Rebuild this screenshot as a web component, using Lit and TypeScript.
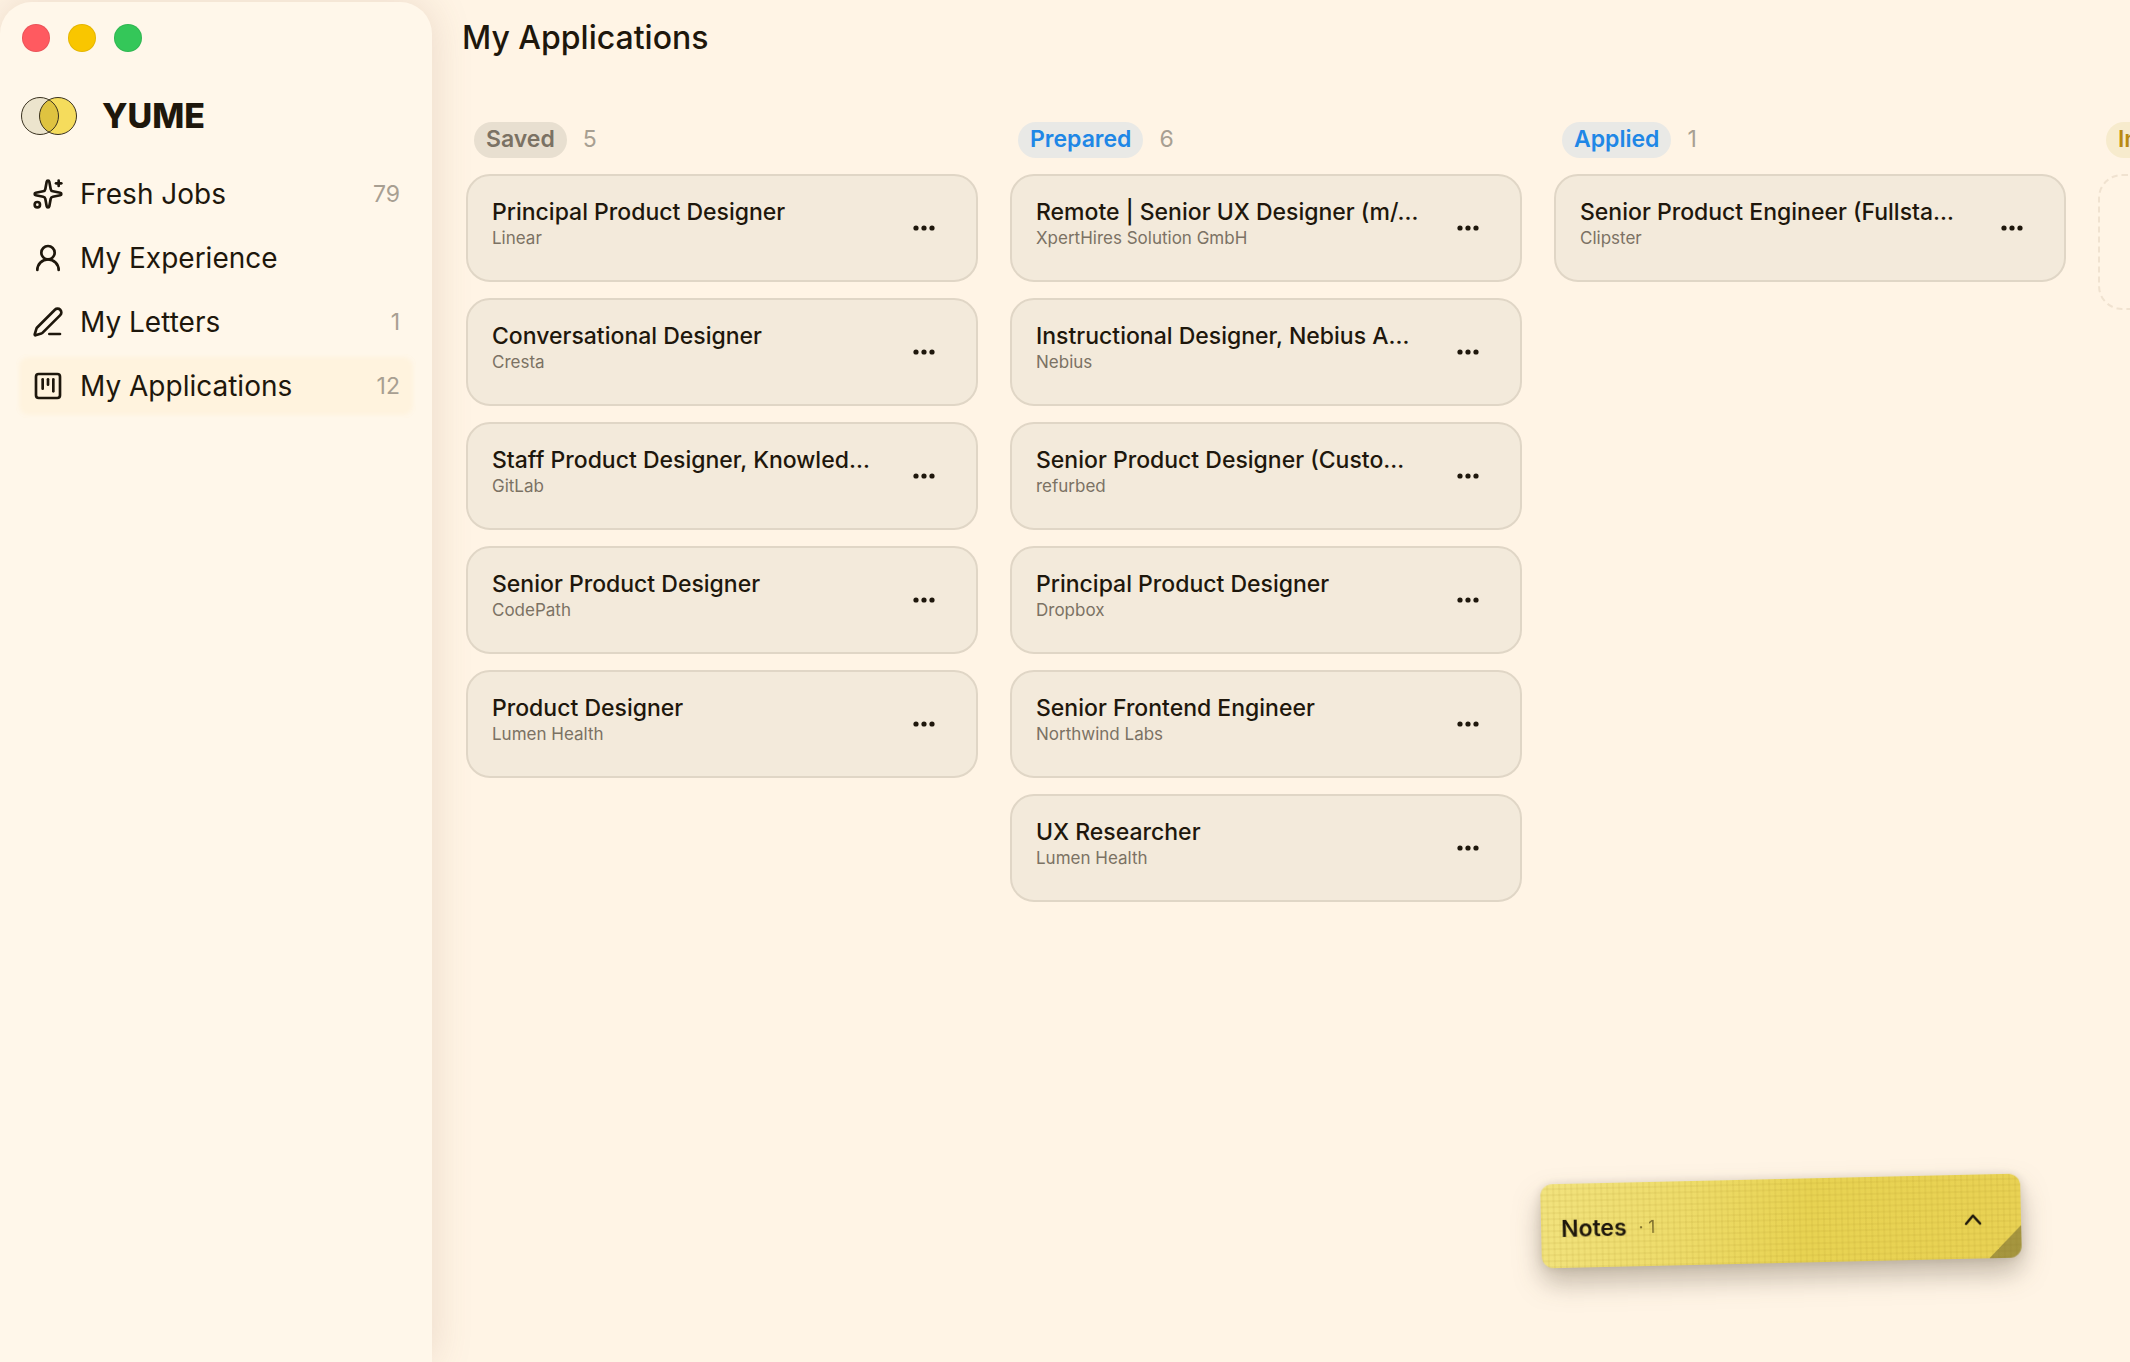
import { LitElement, html, css, svg } from "lit";
import { customElement, property } from "lit/decorators.js";

type Tone = "neutral" | "info" | "amber";

interface Job {
  title: string;
  company: string;
}

interface Column {
  name: string;
  tone: Tone;
  jobs: Job[];
}

interface NavItem {
  label: string;
  icon: keyof typeof icons;
  count?: number;
  active?: boolean;
}

const icons = {
  sparkles: svg`<path d="M11.017 2.814a1 1 0 0 1 1.966 0l1.051 5.558a2 2 0 0 0 1.594 1.594l5.558 1.051a1 1 0 0 1 0 1.966l-5.558 1.051a2 2 0 0 0-1.594 1.594l-1.051 5.558a1 1 0 0 1-1.966 0l-1.051-5.558a2 2 0 0 0-1.594-1.594l-5.558-1.051a1 1 0 0 1 0-1.966l5.558-1.051a2 2 0 0 0 1.594-1.594z"/><path d="M20 2v4"/><path d="M22 4h-4"/><circle cx="4" cy="20" r="2"/>`,
  user: svg`<circle cx="12" cy="8" r="5"/><path d="M20 21a8 8 0 0 0-16 0"/>`,
  pen: svg`<path d="M13 21h8"/><path d="M21.174 6.812a1 1 0 0 0-3.986-3.987L3.842 16.174a2 2 0 0 0-.5.83l-1.321 4.352a.5.5 0 0 0 .623.622l4.353-1.32a2 2 0 0 0 .83-.497z"/>`,
  kanban: svg`<rect x="3" y="3" width="18" height="18" rx="2"/><path d="M8 7v7"/><path d="M12 7v4"/><path d="M16 7v9"/>`,
};

const navItems: NavItem[] = [
  { label: "Fresh Jobs", icon: "sparkles", count: 79 },
  { label: "My Experience", icon: "user" },
  { label: "My Letters", icon: "pen", count: 1 },
  { label: "My Applications", icon: "kanban", count: 12, active: true },
];

const columns: Column[] = [
  {
    name: "Saved",
    tone: "neutral",
    jobs: [
      { title: "Principal Product Designer", company: "Linear" },
      { title: "Conversational Designer", company: "Cresta" },
      { title: "Staff Product Designer, Knowled…", company: "GitLab" },
      { title: "Senior Product Designer", company: "CodePath" },
      { title: "Product Designer", company: "Lumen Health" },
    ],
  },
  {
    name: "Prepared",
    tone: "info",
    jobs: [
      { title: "Remote | Senior UX Designer (m/…", company: "XpertHires Solution GmbH" },
      { title: "Instructional Designer, Nebius A…", company: "Nebius" },
      { title: "Senior Product Designer (Custo…", company: "refurbed" },
      { title: "Principal Product Designer", company: "Dropbox" },
      { title: "Senior Frontend Engineer", company: "Northwind Labs" },
      { title: "UX Researcher", company: "Lumen Health" },
    ],
  },
  {
    name: "Applied",
    tone: "info",
    jobs: [{ title: "Senior Product Engineer (Fullsta…", company: "Clipster" }],
  },
  { name: "Interview", tone: "amber", jobs: [] },
];

@customElement("side-bar")
class SideBar extends LitElement {
  static styles = css`
    :host {
      display: flex;
      flex-direction: column;
      box-sizing: border-box;
      padding: 22px 16px;
      background: #fff7ea;
      border-radius: 32px 32px 0 0;
      box-shadow: 0 0 40px rgba(140, 95, 60, 0.18);
    }
    .window-controls {
      display: flex;
      gap: 18px;
      padding: 0 6px;
    }
    .dot {
      box-sizing: border-box;
      width: 28px;
      height: 28px;
      padding: 0;
      border: 1px solid rgba(0, 0, 0, 0.08);
      border-radius: 50%;
    }
    .close {
      background: #ff5a60;
    }
    .minimize {
      background: #f9c600;
    }
    .zoom {
      background: #34c759;
    }
    .brand {
      display: flex;
      align-items: center;
      gap: 24px;
      margin: 44px 4px 26px;
      color: #1e170c;
      font-size: 34px;
      line-height: 40px;
      font-weight: 800;
      text-decoration: none;
    }
    .mark {
      width: 58px;
      height: 40px;
    }
    nav {
      display: flex;
      flex-direction: column;
    }
    .item {
      display: flex;
      align-items: center;
      gap: 16px;
      padding: 16px;
      border-radius: 12px;
      color: #1e170c;
      font-size: 28px;
      line-height: 32px;
      text-decoration: none;
    }
    .active {
      background: linear-gradient(#fff3de, #fff3de) content-box;
      background: #fff3de;
      box-shadow: inset 0 0 4px 3px #fff7ea;
    }
    .icon {
      width: 32px;
      height: 32px;
      fill: none;
      stroke: currentColor;
      stroke-width: 2;
      stroke-linecap: round;
      stroke-linejoin: round;
    }
    .label {
      flex: 1;
    }
    .count {
      color: #a89f92;
      font-size: 23px;
    }
  `;

  render() {
    return html`
      <div class="window-controls">
        <button class="dot close" aria-label="Close"></button>
        <button class="dot minimize" aria-label="Minimize"></button>
        <button class="dot zoom" aria-label="Zoom"></button>
      </div>
      <a class="brand" href="#">
        <svg class="mark" viewBox="0 0 58 40" aria-hidden="true">
          <circle cx="20" cy="20" r="18.5" fill="#ece4cd" />
          <circle cx="38" cy="20" r="18.5" fill="#f5dc5c" />
          <path d="M29 3.8a18.5 18.5 0 0 1 0 32.4a18.5 18.5 0 0 1 0-32.4z" fill="#dfc340" />
          <g fill="none" stroke="#3a3220" stroke-width="1">
            <circle cx="20" cy="20" r="18.5" />
            <circle cx="38" cy="20" r="18.5" />
          </g>
        </svg>
        YUME
      </a>
      <nav>
        ${navItems.map(
          (n) => html`
            <a class="item ${n.active ? "active" : ""}" href="#">
              <svg class="icon" viewBox="0 0 24 24" aria-hidden="true">${icons[n.icon]}</svg>
              <span class="label">${n.label}</span>
              ${n.count ? html`<span class="count">${n.count}</span>` : ""}
            </a>
          `,
        )}
      </nav>
    `;
  }
}

@customElement("job-card")
class JobCard extends LitElement {
  @property({ attribute: false }) job!: Job;

  static styles = css`
    :host {
      display: flex;
      align-items: center;
      box-sizing: border-box;
      min-height: 108px;
      padding: 16px 24px;
      border: 2px solid #e0d6c6;
      border-radius: 24px;
      background: #f3eadb;
    }
    .text {
      flex: 1;
      min-width: 0;
      padding-bottom: 8px;
    }
    .title,
    .company {
      margin: 0;
      overflow: hidden;
      text-overflow: ellipsis;
      white-space: nowrap;
    }
    .title {
      color: #1e170c;
      font-size: 23px;
      line-height: 28px;
      font-weight: 500;
    }
    .company {
      color: #7b7264;
      font-size: 17px;
      line-height: 24px;
    }
    .more {
      display: flex;
      align-items: center;
      justify-content: center;
      width: 56px;
      height: 40px;
      padding: 0;
      border: 0;
      background: none;
      color: #1e170c;
    }
    .dots {
      width: 24px;
      height: 8px;
      fill: currentColor;
    }
  `;

  render() {
    return html`
      <div class="text">
        <h3 class="title">${this.job.title}</h3>
        <p class="company">${this.job.company}</p>
      </div>
      <button class="more" aria-label="More actions">
        <svg class="dots" viewBox="0 0 24 8" aria-hidden="true">
          <circle cx="4" cy="4" r="2.6" />
          <circle cx="12" cy="4" r="2.6" />
          <circle cx="20" cy="4" r="2.6" />
        </svg>
      </button>
    `;
  }
}

@customElement("job-column")
class JobColumn extends LitElement {
  @property({ attribute: false }) column!: Column;

  static styles = css`
    :host {
      display: flex;
      flex-direction: column;
      gap: 16px;
    }
    .head {
      display: flex;
      align-items: center;
      gap: 16px;
      padding: 0 8px;
    }
    .pill,
    .count {
      margin: 0;
      padding-bottom: 2px;
      font-size: 23px;
      line-height: 34px;
    }
    .pill {
      padding-left: 12px;
      padding-right: 12px;
      border-radius: 18px;
      font-weight: 600;
    }
    .neutral {
      background: #e8dfd0;
      color: #7b7264;
    }
    .info {
      background: #e9e9e6;
      color: #2087e6;
    }
    .amber {
      background: #f7ebcd;
      color: #b98a12;
    }
    .count {
      color: #a89f92;
    }
    .empty {
      box-sizing: border-box;
      height: 136px;
      border: 2px dashed #f0e2d0;
      border-radius: 24px;
    }
  `;

  render() {
    const { name, tone, jobs } = this.column;
    return html`
      <div class="head">
        <h2 class="pill ${tone}">${name}</h2>
        <span class="count">${jobs.length}</span>
      </div>
      ${jobs.length
        ? jobs.map((job) => html`<job-card .job=${job}></job-card>`)
        : html`<div class="empty"></div>`}
    `;
  }
}

@customElement("sticky-note")
class StickyNote extends LitElement {
  static styles = css`
    :host {
      display: block;
      transform: rotate(-1.3deg);
      filter: drop-shadow(0 14px 14px rgba(60, 50, 30, 0.28)) drop-shadow(0 1px 4px rgba(60, 50, 30, 0.16));
    }
    .note {
      display: flex;
      align-items: center;
      gap: 12px;
      box-sizing: border-box;
      width: 100%;
      height: 84px;
      padding: 6px 36px 0 20px;
      border: 0;
      border-radius: 12px;
      background:
        linear-gradient(135deg, transparent 50%, rgba(110, 100, 45, 0.55) 50%) right bottom / 32px 32px no-repeat,
        repeating-linear-gradient(0deg, rgba(150, 120, 20, 0.08) 0 2px, transparent 2px 6px),
        repeating-linear-gradient(90deg, rgba(150, 120, 20, 0.08) 0 2px, transparent 2px 6px),
        linear-gradient(100deg, #f2e37e 0%, #eedc6a 30%, #e8d352 55%, #e9d254 100%);
      color: #1e170c;
      font-family: inherit;
      text-align: left;
    }
    .name {
      font-size: 23px;
      line-height: 32px;
      font-weight: 600;
    }
    .count {
      flex: 1;
      color: #7d6e2c;
      font-size: 17px;
      line-height: 32px;
    }
    .chevron {
      width: 24px;
      height: 24px;
      fill: none;
      stroke: currentColor;
      stroke-width: 2.5;
      stroke-linecap: round;
      stroke-linejoin: round;
    }
  `;

  render() {
    return html`
      <button class="note" aria-expanded="false">
        <span class="name">Notes</span>
        <span class="count">· 1</span>
        <svg class="chevron" viewBox="0 0 24 24" aria-hidden="true"><path d="M5 16l7-8 7 8" /></svg>
      </button>
    `;
  }
}

@customElement("app-root")
class AppRoot extends LitElement {
  static styles = css`
    :host {
      display: grid;
      grid-template-columns: 432px minmax(0, 1fr);
      box-sizing: border-box;
      min-height: 100vh;
      padding-top: 2px;
      overflow: hidden;
      background: #fff4e5;
      font-family: Inter, "Liberation Sans", sans-serif;
    }
    main {
      display: flex;
      flex-direction: column;
      gap: 64px;
      padding-top: 16px;
    }
    .heading {
      margin: 0 30px;
      color: #1e170c;
      font-size: 32px;
      line-height: 40px;
      font-weight: 500;
    }
    .board {
      display: grid;
      grid-auto-flow: column;
      grid-auto-columns: 512px;
      align-items: start;
      gap: 32px;
      padding-left: 34px;
      overflow: hidden;
    }
    .floating {
      position: fixed;
      right: 109px;
      bottom: 99px;
      width: 480px;
    }
  `;

  render() {
    return html`
      <side-bar></side-bar>
      <main>
        <h1 class="heading">My Applications</h1>
        <div class="board">
          ${columns.map((c) => html`<job-column .column=${c}></job-column>`)}
        </div>
      </main>
      <sticky-note class="floating"></sticky-note>
    `;
  }
}
